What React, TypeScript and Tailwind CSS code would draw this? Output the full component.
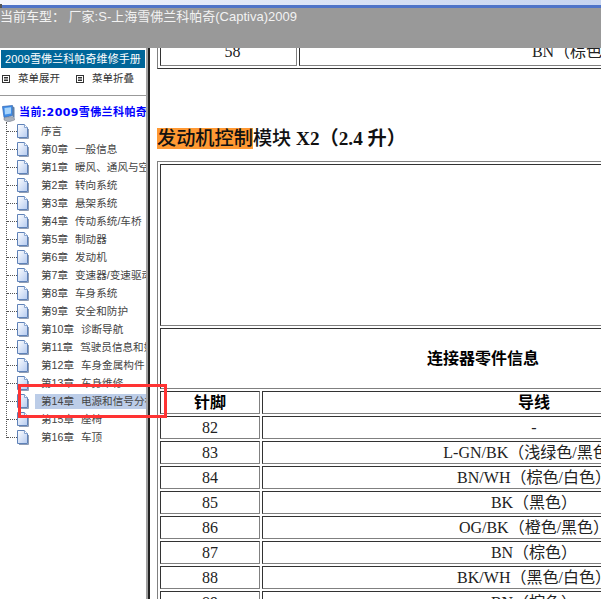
const serif = "font-['Liberation_Serif','Noto_Sans_CJK_SC',serif]";
const sans = "font-['Liberation_Sans','Noto_Sans_CJK_SC',sans-serif]";
const cell = "border border-t-[#333] border-l-[#333] border-b-[#808080] border-r-[#808080] p-0 text-center align-middle";
const tableOuter = "table-fixed border-separate border-spacing-[2px] border border-t-[#808080] border-l-[#808080] border-b-[#333] border-r-[#333]";

const chapters = ["序言","第0章 一般信息","第1章 暖风、通风与空调系统","第2章 转向系统","第3章 悬架系统","第4章 传动系统/车桥","第5章 制动器","第6章 发动机","第7章 变速器/变速驱动桥","第8章 车身系统","第9章 安全和防护","第10章 诊断导航","第11章 驾驶员信息和娱乐","第12章 车身金属构件","第13章 车身维修","第14章 电源和信号分布","第15章 座椅","第16章 车顶"];

const pins: [string, string][] = [["82","-"],["83","L-GN/BK（浅绿色/黑色）"],["84","BN/WH（棕色/白色）"],["85","BK（黑色）"],["86","OG/BK（橙色/黑色）"],["87","BN（棕色）"],["88","BK/WH（黑色/白色）"],["89","BN（棕色）"]];

function Page() {
  return (
    <svg width="12" height="15" viewBox="0 0 12 15" className="shrink-0">
      <defs>
        <linearGradient id="pg" x1="0" y1="0" x2="1" y2="1">
          <stop offset="0" stopColor="#ffffff" />
          <stop offset="1" stopColor="#b4caf0" />
        </linearGradient>
      </defs>
      <path d="M11.5 5V14.5H2" fill="none" stroke="#8f9db5" />
      <path d="M0.5 0.5H7.5L10.5 3.5V13.5H0.5Z" fill="url(#pg)" stroke="#5f82b8" />
      <path d="M7.5 0.5V3.5H10.5" fill="#fff" stroke="#86a4d0" />
    </svg>
  );
}

function MenuIcon() {
  return (
    <svg width="8" height="8" viewBox="0 0 8 8" className="shrink-0">
      <rect x="0.5" y="0.5" width="7" height="7" fill="#fff" stroke="#333" />
      <path d="M2 2.5H6M2 4H6M2 5.5H6" stroke="#333" />
    </svg>
  );
}

function Computer() {
  return (
    <svg width="13" height="17" viewBox="0 0 13 17" className="shrink-0">
      <path d="M0.5 1.5L10.5 0.5V10.5L2 12.5Z" fill="#3f8ee8" stroke="#2f62b0" strokeWidth="0.7" />
      <path d="M2.5 3L9 2.2V8.5L3 9.5Z" fill="#a8d4fb" />
      <path d="M10.5 1L12.5 2.5V13L10.5 12Z" fill="#5d7fa8" />
      <path d="M2 13L9 11.5L12.5 13.5V15L6.5 17L2 15Z" fill="#aab2bd" stroke="#6e7784" strokeWidth="0.5" />
    </svg>
  );
}

export default function App() {
  return (
    <div className={`relative w-[601px] h-[599px] overflow-hidden bg-white flex flex-col ${sans}`}>
      <div className="h-[5px] bg-gradient-to-r from-[#f4f6fc] to-[#c6d4f0]" />
      <div className="h-[3px] bg-[#4f74c8]" />
      <div className="absolute left-0 top-[4px] w-[2px] h-[4px] bg-[#555]" />
      <div className="relative z-10 h-[40px] bg-[#999999] text-[#f2f2f2] text-[13px] leading-[17px] whitespace-nowrap">
        当前车型： 厂家:S-上海雪佛兰科帕奇(Captiva)2009
      </div>
      <div className="flex h-[551px]">
        <div className="w-[146px] shrink-0 overflow-hidden pt-[2px]">
          <div className="ml-[1px] w-[144px] h-[18px] bg-[#006699] text-white text-[11px] tracking-[0.1px] leading-[18px] text-center whitespace-nowrap">
            2009雪佛兰科帕奇维修手册
          </div>
          <div className="h-[21px] flex items-center pl-[2px] text-[10.5px] text-[#333] whitespace-nowrap">
            <MenuIcon />
            <span className="ml-[8px] w-[58px] shrink-0">菜单展开</span>
            <MenuIcon />
            <span className="ml-[8px]">菜单折叠</span>
          </div>
          <div className="mt-[6px] h-[1px] bg-[#999]" />
          <div className="mt-[9px] ml-[2px] h-[17px] flex items-center whitespace-nowrap overflow-hidden text-[#0000ff] font-bold text-[11px] font-['DejaVu_Sans','Noto_Sans_CJK_SC',sans-serif]">
            <Computer />
            <span className="ml-[4px] tracking-[0.4px]">当前:2009雪佛兰科帕奇维修手册</span>
          </div>
          <div className="relative">
            <div className="absolute left-[6px] top-0 h-[316px] border-l border-dotted border-[#555]" />
            {chapters.map((c, i) => (
              <div key={c} className="h-[18px] flex items-center whitespace-nowrap">
                <div className="ml-[7px] w-[10px] shrink-0 border-t border-dotted border-[#555]" />
                <Page />
                <div className={`ml-[6px] pl-[6px] h-[15px] leading-[15px] grow min-w-0 text-[10.6px] [word-spacing:4px] text-[#444] overflow-hidden ${i === 15 ? "bg-[#bccde8]" : ""}`}>
                  {c}
                </div>
              </div>
            ))}
          </div>
        </div>
        <div className="w-[2px] shrink-0 bg-[#a0a0a0]" />
        <div className="w-[2px] shrink-0 bg-[#222]" />
        <div className={`grow overflow-hidden text-[16px] leading-[18px] text-[#222] ${serif}`}>
          <div className="-mt-[9px] ml-[7px] w-[700px]">
            <table className={`${tableOuter} w-[697px]`}>
              <colgroup>
                <col className="w-[137px]" />
                <col />
              </colgroup>
              <tbody>
                <tr className="h-[24px]">
                  <td className={`${cell} align-top pl-[8px]`}>58</td>
                  <td className={`${cell} align-top`}>BN（棕色）</td>
                </tr>
              </tbody>
            </table>
            <h2 className="mt-[60px] h-[20px] whitespace-nowrap text-[19.2px] leading-[20px] font-medium text-[#111]">
              <span className="bg-[#ff9933]">发动机控制</span>模块 <span className="font-bold">X2（2.4 升）</span>
            </h2>
            <table className={`${tableOuter} mt-[12px] w-[650px]`}>
              <colgroup>
                <col className="w-[100px]" />
                <col className="w-[544px]" />
              </colgroup>
              <tbody>
                <tr className="h-[162px]">
                  <td colSpan={2} className={cell}></td>
                </tr>
                <tr className="h-[61px]">
                  <td colSpan={2} className={`${cell} font-bold text-black`}>连接器零件信息</td>
                </tr>
                <tr className="h-[23px]">
                  <td className={`${cell} font-bold text-black`}>针脚</td>
                  <td className={`${cell} font-bold text-black`}>导线</td>
                </tr>
                {pins.map(([p, w]) => (
                  <tr key={p} className="h-[23px]">
                    <td className={cell}>{p}</td>
                    <td className={`${cell} whitespace-nowrap`}>{w}</td>
                  </tr>
                ))}
              </tbody>
            </table>
          </div>
        </div>
      </div>
      <div className="absolute z-20 left-[18px] top-[384px] w-[149px] h-[34px] border-[3px] border-[#ff3333]" />
    </div>
  );
}
